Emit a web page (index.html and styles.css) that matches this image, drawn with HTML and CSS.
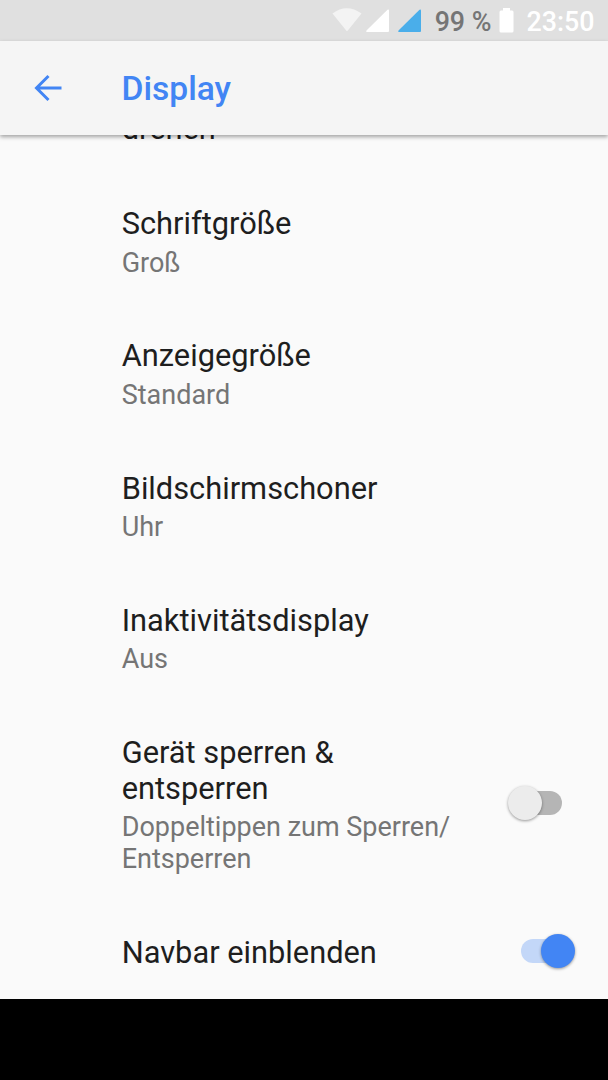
FILE: index.html
```html
<!DOCTYPE html>
<html lang="de">

<head>
    <meta charset="UTF-8">
    <title>Display</title>
    <link rel="stylesheet" href="styles.css">
</head>

<body>
    <div class="statusbar">
        <svg class="icons" width="94" height="40" viewBox="0 0 94 40">
            <path fill="#f3f3f3" d="M0.5 13.5 Q14.5 3 29.5 13.5 L15.8 30.5 Q15 31.5 14.2 30.5 Z" />
            <path fill="#fff" d="M34.5 30.5 L55.5 9.8 Q57 8.8 57 10.5 V31 Q57 32 56 32 H35 Q33.5 32 34.5 30.5 Z" />
            <path fill="#4aaeea" d="M66.5 30.5 L87.5 9.8 Q89 8.8 89 10.5 V31 Q89 32 88 32 H67 Q65.5 32 66.5 30.5 Z" />
        </svg>
        <span class="percent">99 %</span>
        <svg class="battery" width="15" height="40" viewBox="0 0 15 40">
            <path fill="#fff" d="M4 8 H11 V10.5 H13 Q14.5 10.5 14.5 12 V31 Q14.5 32.5 13 32.5 H2 Q0.5 32.5 0.5 31 V12 Q0.5 10.5 2 10.5 H4 Z" />
        </svg>
        <span class="clock">23:50</span>
    </div>
    <div class="header">
        <svg class="back" width="28" height="28" viewBox="0 0 28 28">
            <path fill="none" stroke="#4285f4" stroke-width="3" d="M27.5 14 H3 M14.5 2 L2.5 14 L14.5 26" />
        </svg>
        <h1>Display</h1>
    </div>
    <div class="list">
        <div class="item first">
            <div class="text">
                <h2>drehen</h2>
            </div>
        </div>
        <div class="item">
            <div class="text">
                <h2>Schriftgröße</h2>
                <p>Groß</p>
            </div>
        </div>
        <div class="item">
            <div class="text">
                <h2>Anzeigegröße</h2>
                <p>Standard</p>
            </div>
        </div>
        <div class="item">
            <div class="text">
                <h2>Bildschirmschoner</h2>
                <p>Uhr</p>
            </div>
        </div>
        <div class="item">
            <div class="text">
                <h2>Inaktivitätsdisplay</h2>
                <p>Aus</p>
            </div>
        </div>
        <div class="item">
            <div class="text">
                <h2>Gerät sperren &amp;<br>entsperren</h2>
                <p>Doppeltippen zum Sperren/<br>Entsperren</p>
            </div>
            <div class="switch"><span class="thumb"></span></div>
        </div>
        <div class="item">
            <div class="text">
                <h2>Navbar einblenden</h2>
            </div>
            <div class="switch on"><span class="thumb"></span></div>
        </div>
    </div>
    <div class="navbar"></div>
</body>

</html>
```
FILE: styles.css
```css
* {
    margin: 0;
    padding: 0;
    box-sizing: border-box;
}

body {
    display: flex;
    flex-direction: column;
    height: 1080px;
    overflow: hidden;
    background: #fafafa;
    font-family: Roboto, sans-serif;
}

.statusbar {
    display: flex;
    flex: none;
    align-items: flex-start;
    justify-content: flex-end;
    height: 41px;
    padding-right: 13.5px;
    background: #e0e0e0;
    font-size: 26.8px;
    font-weight: 500;
    line-height: 40px;
    white-space: nowrap;
}

.percent {
    margin: 2px 7px 0 8.5px;
    color: #757575;
}

.clock {
    margin: 2px 0 0 13px;
    color: #fff;
}

.header {
    display: flex;
    flex: none;
    align-items: center;
    position: relative;
    z-index: 1;
    height: 94px;
    padding-left: 33.5px;
    background: #f5f5f5;
    box-shadow: 0 2px 4px rgba(0, 0, 0, 0.35);
}

.header h1 {
    margin: 1px 0 0 60px;
    color: #4285f4;
    font-size: 33.6px;
    font-weight: 500;
}

.list {
    flex: 1;
    min-height: 0;
    overflow: hidden;
}

.item {
    display: flex;
    align-items: center;
    justify-content: space-between;
    padding: 29.9px 46px 29.9px 121.7px;
}

/* scrolled half under the header */
.item.first {
    margin-top: -24.5px;
    padding-top: 0;
}

.item h2 {
    color: #1e1e1e;
    font-size: 30.8px;
    font-weight: 400;
    line-height: 36px;
}

.item p {
    margin-top: 4.4px;
    color: #757575;
    font-size: 27px;
    line-height: 32px;
}

.switch {
    display: flex;
    align-items: center;
    width: 41px;
    height: 24px;
    margin-bottom: 5px;
    border-radius: 12px;
    background: #b5b5b5;
}

.thumb {
    flex: none;
    width: 34px;
    height: 34px;
    margin-left: -13px;
    border-radius: 50%;
    background: #ececec;
    box-shadow: 0 1px 3px rgba(0, 0, 0, 0.4);
}

.switch.on {
    background: #c3d7f8;
}

.switch.on .thumb {
    margin-left: 20px;
    background: #4285f4;
}

.navbar {
    flex: none;
    height: 81px;
    background: #000;
}
```
